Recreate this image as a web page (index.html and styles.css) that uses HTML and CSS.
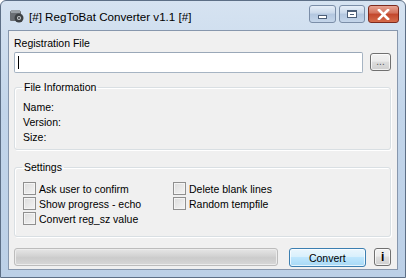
FILE: index.html
```html
<!DOCTYPE html>
<html lang="en">
<head>
  <meta charset="UTF-8" />
  <title>RegToBat Converter</title>
  <link rel="stylesheet" href="styles.css">
</head>
<body>
  <div class="window">
    <!-- TITLE BAR -->
    <div class="titlebar">
      <svg class="app-icon" width="16" height="16" viewBox="0 0 16 16">
        <rect x="1" y="3" width="11" height="10" rx="1" fill="#6a6e73"/>
        <rect x="2" y="2" width="9" height="3" fill="#9aa0a6"/>
        <circle cx="10" cy="10" r="4.5" fill="#3d4144"/>
        <circle cx="10" cy="10" r="2" fill="#c9ccce"/>
        <circle cx="10" cy="10" r="1" fill="#3d4144"/>
      </svg>
      <span class="title">[#] RegToBat Converter v1.1 [#]</span>
      <div class="caption-buttons">
        <div class="cap-btn cap-min"><span class="min-glyph"></span></div>
        <div class="cap-btn cap-max"><span class="max-glyph"></span></div>
        <div class="cap-btn cap-close">
          <svg width="13" height="11" viewBox="0 0 13 11">
            <path d="M2 1 L11 10 M11 1 L2 10" stroke="#fff" stroke-width="2.6" stroke-linecap="square"/>
          </svg>
        </div>
      </div>
    </div>

    <!-- CLIENT AREA -->
    <div class="client">
      <label class="field-label">Registration File</label>
      <div class="file-row">
        <div class="textbox"><span class="caret"></span></div>
        <button class="btn btn-browse">...</button>
      </div>

      <fieldset class="group group-info">
        <legend>File Information</legend>
        <div class="info-line">Name:</div>
        <div class="info-line">Version:</div>
        <div class="info-line">Size:</div>
      </fieldset>

      <fieldset class="group group-settings">
        <legend>Settings</legend>
        <div class="options">
          <div class="opt-col">
            <div class="opt"><span class="check"></span>Ask user to confirm</div>
            <div class="opt"><span class="check"></span>Show progress - echo</div>
            <div class="opt"><span class="check"></span>Convert reg_sz value</div>
          </div>
          <div class="opt-col">
            <div class="opt"><span class="check"></span>Delete blank lines</div>
            <div class="opt"><span class="check"></span>Random tempfile</div>
          </div>
        </div>
      </fieldset>

      <div class="bottom-row">
        <div class="progress"></div>
        <button class="btn btn-convert">Convert</button>
        <button class="btn btn-info">i</button>
      </div>
    </div>
  </div>
</body>
</html>
```

FILE: styles.css
```css
* {
  box-sizing: border-box;
}
body {
  margin: 0;
  width: 406px;
  height: 278px;
  overflow: hidden;
  background: #fff;
  font-family: 'Liberation Sans', Arial, sans-serif;
  font-size: 10.5px;
  color: #000;
}
.window {
  width: 406px;
  height: 278px;
  background: linear-gradient(180deg, #d6e3f1 0%, #c2d5ea 40%, #bcd0e7 100%);
  border: 1px solid #5d6f86;
  border-radius: 6px 6px 0 0;
  padding: 0 7px 7px 7px;
  display: flex;
  flex-direction: column;
}
.titlebar {
  height: 29px;
  display: flex;
  align-items: center;
  padding-left: 1px;
}
.app-icon {
  flex: none;
  margin-right: 4px;
}
.title {
  font-size: 11.6px;
  color: #000;
  flex: 1;
  margin-top: 1px;
}
.caption-buttons {
  display: flex;
  align-self: flex-start;
  margin-top: 4px;
  gap: 3px;
  margin-right: -1px;
}
.cap-btn {
  height: 18px;
  border: 1px solid #7b8ea8;
  border-radius: 3px;
  display: flex;
  align-items: center;
  justify-content: center;
  background: linear-gradient(180deg, #e6eef8 0%, #c9d8ea 45%, #b2c6df 50%, #c5d6ea 100%);
}
.cap-min {
  width: 27px;
}
.cap-max {
  width: 26px;
}
.cap-close {
  width: 31px;
  border-color: #7d2a1e;
  background: linear-gradient(180deg, #e8a493 0%, #d2705a 45%, #c2462c 50%, #d56b4a 100%);
}
.min-glyph {
  width: 9px;
  height: 4px;
  margin-top: 5px;
  background: #fff;
  border: 1px solid #4d5f78;
}
.max-glyph {
  width: 10px;
  height: 8px;
  border: 1px solid #4d5f78;
  border-top-width: 2px;
  background: #fff;
  box-shadow: inset 0 0 0 2px #fff, inset 0 0 0 3px #4d5f78;
}
.client {
  flex: 1;
  background: #f0f0f0;
  border: 1px solid #8797ad;
  padding: 5px 6px 0 5px;
}
.field-label {
  display: block;
  height: 15px;
  line-height: 15px;
}
.file-row {
  display: flex;
  align-items: flex-start;
  margin-top: 1px;
}
.textbox {
  width: 350px;
  height: 21px;
  background: #fff;
  border: 1px solid #a6b4c3;
  border-top-color: #9aa8b8;
  border-radius: 2px;
  padding: 3px 3px;
}
.caret {
  display: block;
  width: 1px;
  height: 13px;
  background: #000;
}
.btn {
  font-family: 'Liberation Sans', Arial, sans-serif;
  font-size: 10.5px;
  color: #000;
  border: 1px solid #707070;
  border-radius: 3px;
  background: linear-gradient(180deg, #f2f2f2 0%, #ebebeb 45%, #dddddd 50%, #cfcfcf 100%);
  padding: 0;
  box-shadow: inset 0 0 0 1px rgba(255, 255, 255, 0.7);
}
.btn-browse {
  width: 21px;
  height: 18px;
  margin-left: 7px;
  margin-top: 1px;
  line-height: 10px;
  font-size: 10px;
  color: #555;
}
.group {
  margin: 0;
  border: 1px solid #d9dfe3;
  border-radius: 3px;
  padding: 0 8px;
  box-shadow: 1px 1px 0 #fff, inset 1px 1px 0 #fff;
}
.group legend {
  padding: 0 2px;
  margin-left: -1px;
  line-height: 13px;
}
.group-info {
  margin-top: 8px;
  height: 69px;
  padding-top: 6px;
}
.info-line {
  height: 15px;
  line-height: 15px;
}
.group-settings {
  margin-top: 11px;
  height: 76px;
  padding-top: 7px;
}
.options {
  display: flex;
}
.opt-col {
  width: 150px;
}
.opt {
  height: 15px;
  display: flex;
  align-items: center;
}
.check {
  width: 13px;
  height: 13px;
  border: 1px solid #8f8f8f;
  background: linear-gradient(135deg, #dcdcdc 0%, #f4f4f4 100%);
  box-shadow: inset 0 0 0 1px #f4f4f4;
  margin-right: 3px;
  flex: none;
}
.bottom-row {
  display: flex;
  align-items: flex-start;
  margin-top: 11px;
}
.progress {
  width: 265px;
  height: 18px;
  border: 1px solid #bcbcbc;
  border-radius: 3px;
  background: linear-gradient(180deg, #e6e6e6 0%, #d2d2d2 45%, #cbcbcb 55%, #d8d8d8 100%);
  box-shadow: inset 0 0 0 1px #ececec;
}
.btn-convert {
  width: 78px;
  height: 19px;
  margin-left: 11px;
  border-color: #3c7fb1;
  background: linear-gradient(180deg, #eaf6fd 0%, #d9f0fc 45%, #bee6fd 50%, #a7d9f5 100%);
}
.btn-info {
  width: 17px;
  height: 18px;
  margin-left: 8px;
  font-weight: bold;
  font-size: 12px;
}
```
